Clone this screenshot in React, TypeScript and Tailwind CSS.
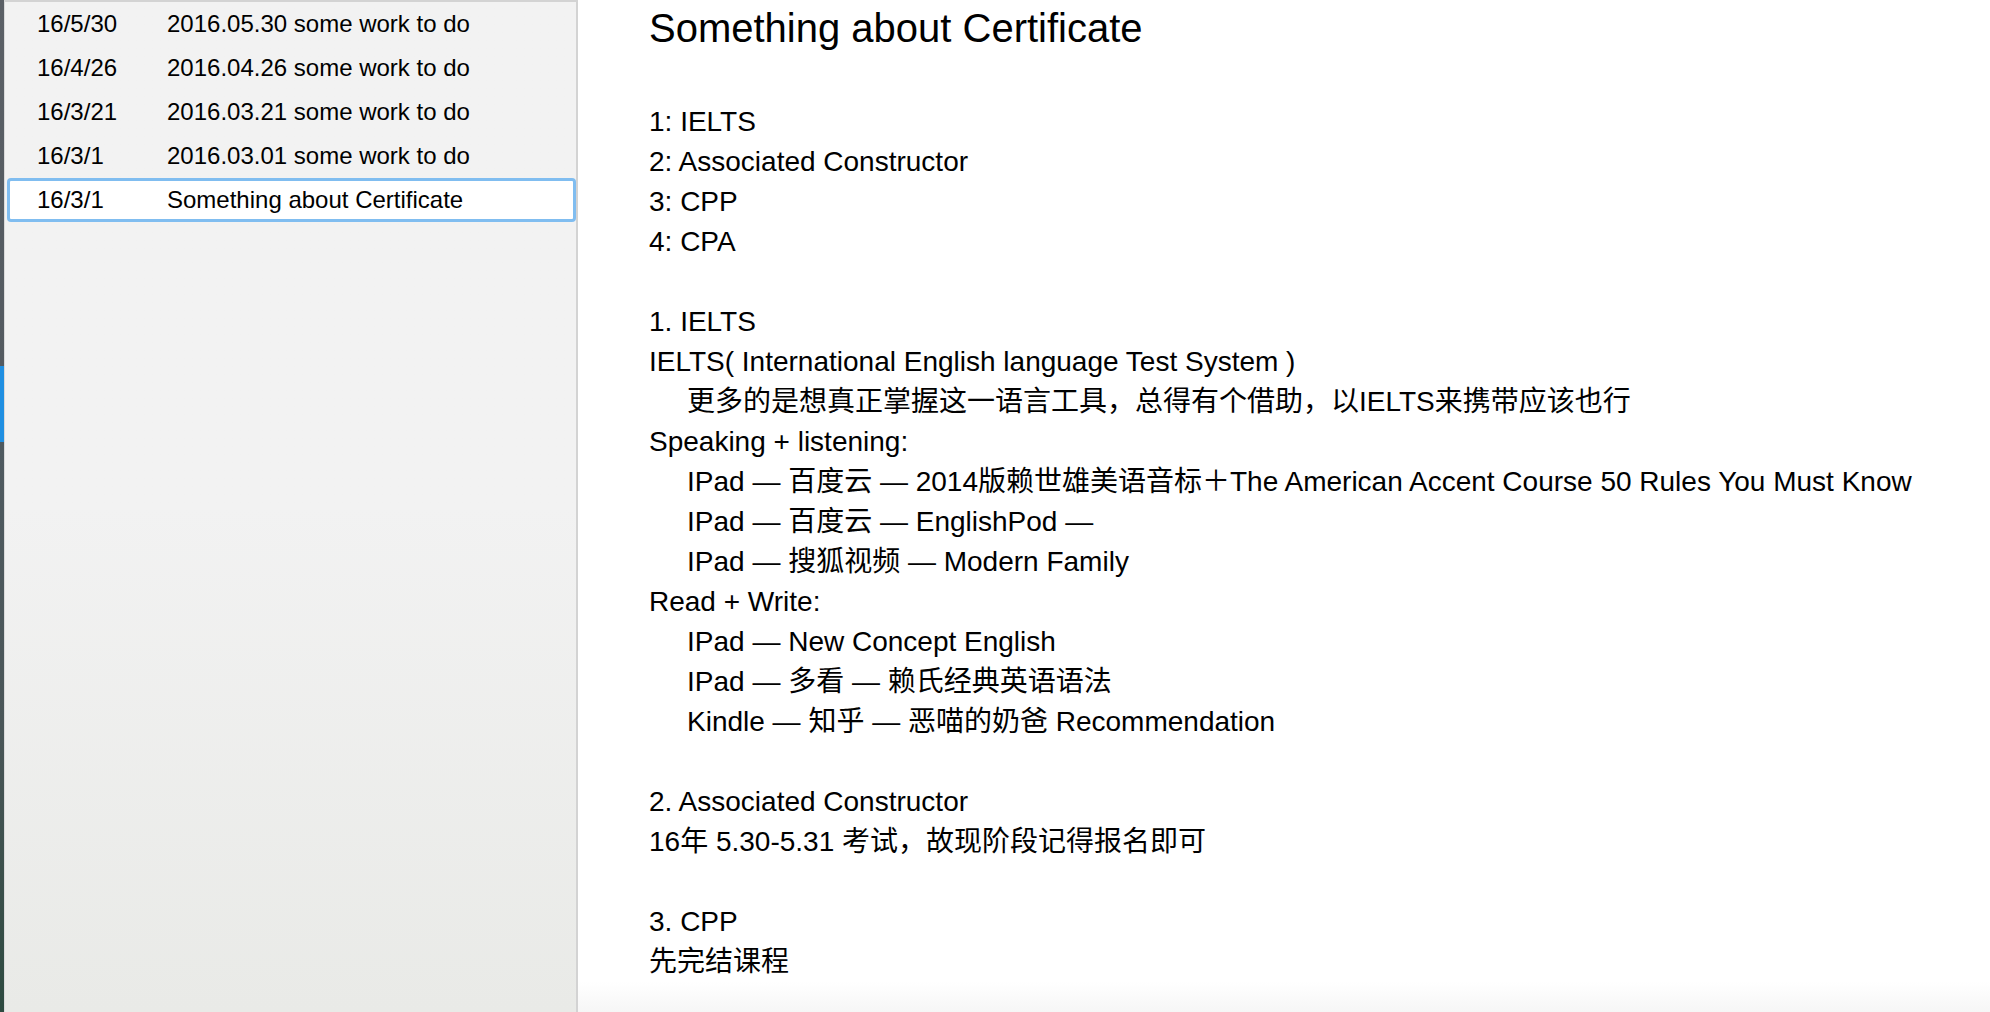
import React from 'react';

interface Note {
  date: string;
  title: string;
}

interface Line {
  text: string;
  indent?: boolean;
}

const notes: Note[] = [
  { date: '16/5/30', title: '2016.05.30 some work to do' },
  { date: '16/4/26', title: '2016.04.26 some work to do' },
  { date: '16/3/21', title: '2016.03.21 some work to do' },
  { date: '16/3/1', title: '2016.03.01 some work to do' },
  { date: '16/3/1', title: 'Something about Certificate' },
];

const lines: Line[] = [
  { text: '1: IELTS' },
  { text: '2: Associated Constructor' },
  { text: '3: CPP' },
  { text: '4: CPA' },
  { text: '' },
  { text: '1. IELTS' },
  { text: 'IELTS( International English language Test System )' },
  { text: '更多的是想真正掌握这一语言工具，总得有个借助，以IELTS来携带应该也行', indent: true },
  { text: 'Speaking + listening:' },
  { text: 'IPad — 百度云 — 2014版赖世雄美语音标＋The American Accent Course 50 Rules You Must Know', indent: true },
  { text: 'IPad — 百度云 — EnglishPod —', indent: true },
  { text: 'IPad — 搜狐视频 — Modern Family', indent: true },
  { text: 'Read + Write:' },
  { text: 'IPad — New Concept English', indent: true },
  { text: 'IPad — 多看 — 赖氏经典英语语法', indent: true },
  { text: 'Kindle — 知乎 — 恶喵的奶爸 Recommendation', indent: true },
  { text: '' },
  { text: '2. Associated Constructor' },
  { text: '16年 5.30-5.31 考试，故现阶段记得报名即可' },
  { text: '' },
  { text: '3. CPP' },
  { text: '先完结课程' },
];

const App: React.FC = () => {
  const selected = 4;

  return (
    <div className="flex h-screen w-full overflow-hidden bg-white font-['Liberation_Sans','Noto_Sans_CJK_SC',sans-serif] text-black">
      {/* desktop edge behind the window */}
      <div className="flex w-[4px] shrink-0 flex-col">
        <div className="h-[366px] bg-linear-to-b from-[#5b6066] to-[#535a60]" />
        <div className="h-[76px] bg-[#1f8fe2]" />
        <div className="flex-1 bg-linear-to-b from-[#4f5a60] via-[#4a5658] to-[#2d4a40]" />
      </div>
      <div className="w-px shrink-0 bg-[#dadada]" />

      {/* note list */}
      <div className="flex w-[573px] shrink-0 flex-col border-t-2 border-r-2 border-[#d3d3d3] bg-linear-to-b from-[#f2f2f2] via-[#f2f2f2] to-[#e9eae7]">
        {notes.map((note, i) =>
          i === selected ? (
            <div
              key={i}
              className="ml-[2px] flex h-[44px] items-center rounded-[4px] border-[3px] border-[#80bdf0] bg-white pl-[27px] text-[24px]"
            >
              <span className="w-[130px] shrink-0">{note.date}</span>
              <span>{note.title}</span>
            </div>
          ) : (
            <div key={i} className="flex h-[44px] items-center pl-[32px] text-[24px]">
              <span className="w-[130px] shrink-0">{note.date}</span>
              <span>{note.title}</span>
            </div>
          )
        )}
      </div>

      {/* note body */}
      <div className="flex-1 bg-linear-to-b from-white from-[97%] to-[#f6f6f6] pl-[71px]">
        <div className="mt-[4px] h-[48px] text-[40px] leading-[48px]">Something about Certificate</div>
        <div className="mt-[50px]">
          {lines.map((line, i) => (
            <div
              key={i}
              className={line.indent ? 'h-10 whitespace-nowrap pl-[38px] text-[28px] leading-10' : 'h-10 whitespace-nowrap text-[28px] leading-10'}
            >
              {line.text}
            </div>
          ))}
        </div>
      </div>
    </div>
  );
};

export default App;
